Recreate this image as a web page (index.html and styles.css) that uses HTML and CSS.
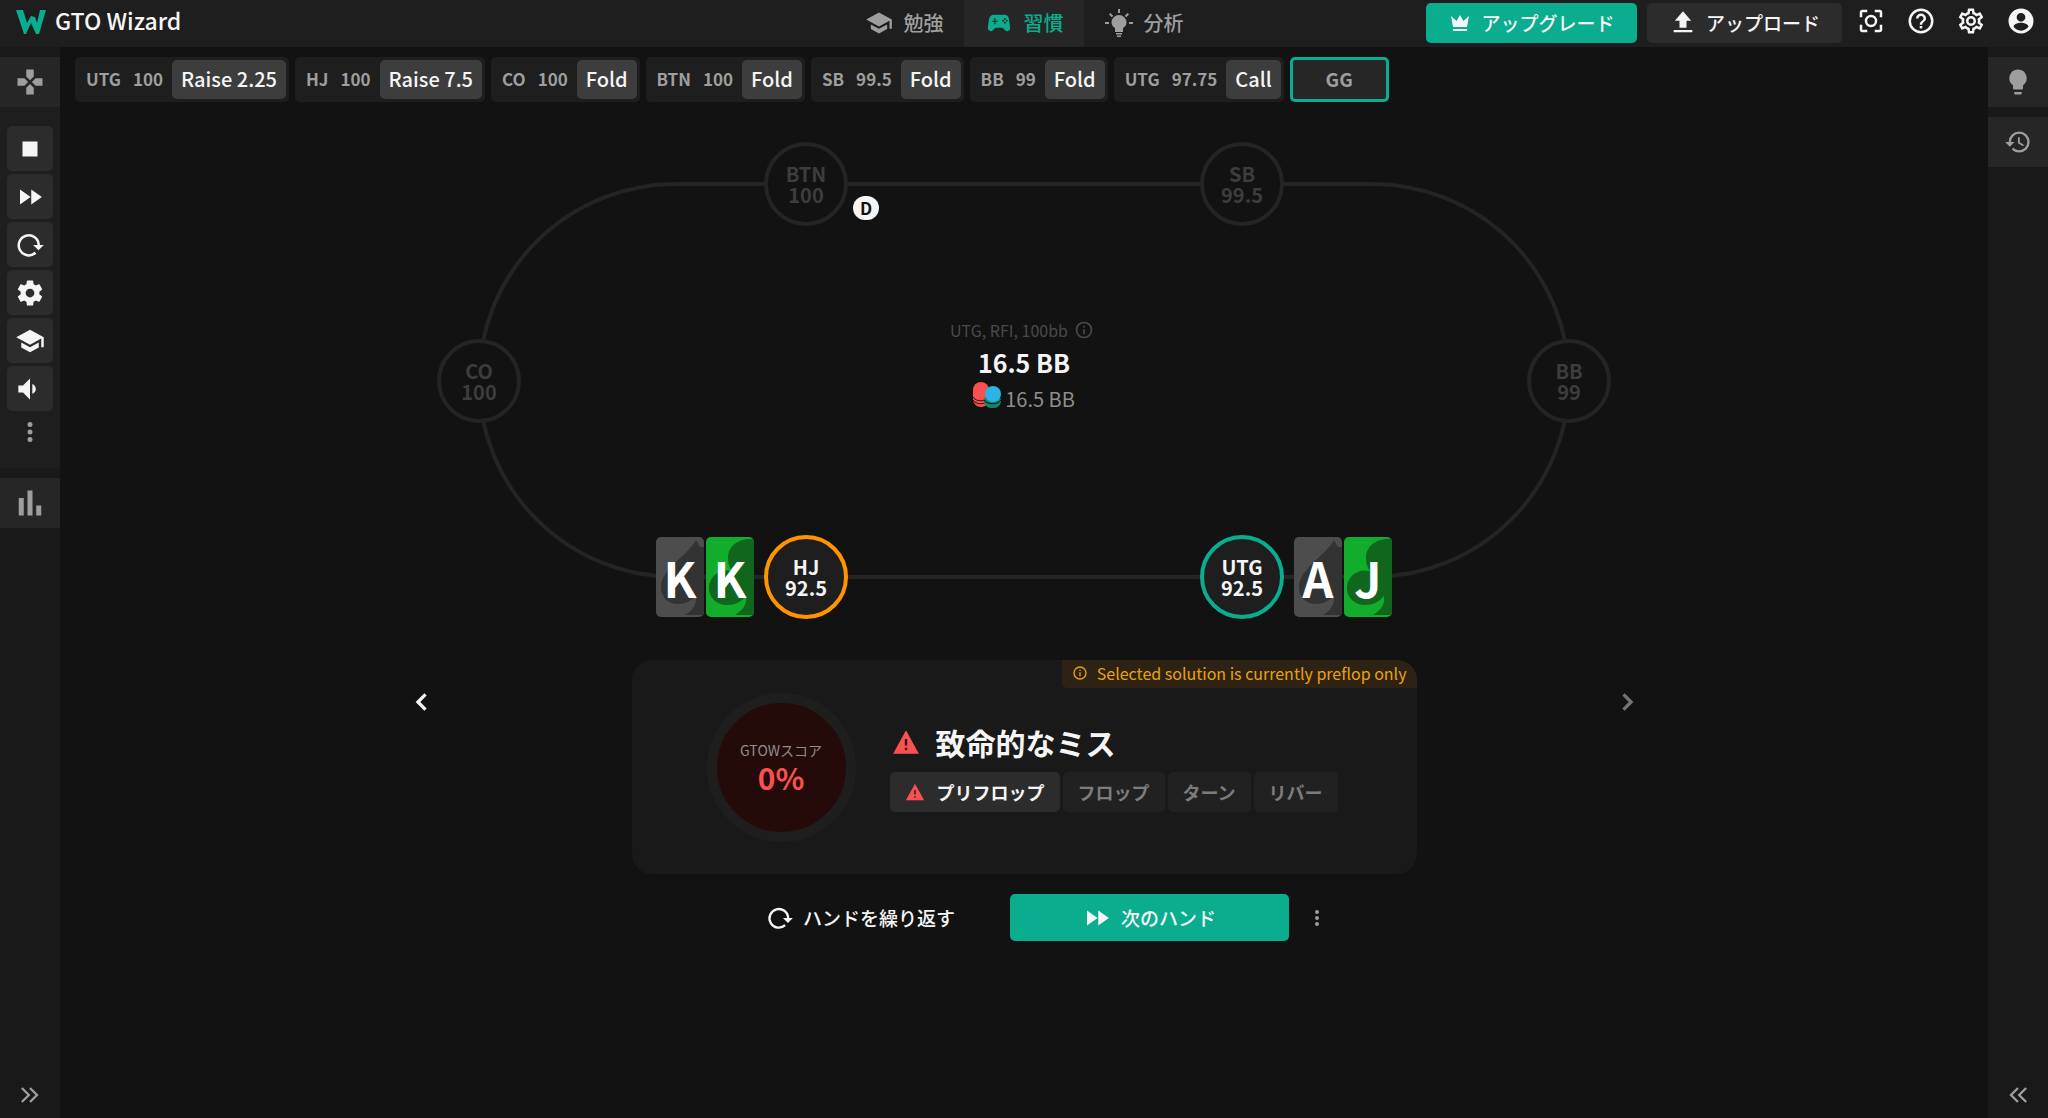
FILE: index.html
```html
<!DOCTYPE html>
<html lang="ja">
<head>
<meta charset="utf-8">
<meta name="viewport" content="width=device-width, initial-scale=1">
<title>GTO Wizard</title>
<link rel="stylesheet" href="styles.css">
</head>
<body>
<svg class="sprite" aria-hidden="true">
  <symbol id="cap" viewBox="0 0 24 24"><path d="M12 3 1 9l11 6 9-4.91V17h2V9M5 13.18v4L12 21l7-3.82v-4L12 17l-7-3.82z"/></symbol>
  <symbol id="pad" viewBox="0 0 24 24"><path fill-rule="evenodd" d="M21.58 16.09l-1.09-7.66A3.996 3.996 0 0 0 16.53 5H7.47C5.48 5 3.79 6.46 3.51 8.43l-1.09 7.66C2.2 17.63 3.39 19 4.94 19c.68 0 1.32-.27 1.8-.75L9 16h6l2.25 2.25c.48.48 1.13.75 1.8.75 1.56 0 2.75-1.37 2.53-2.91zM11 11H9v2H8v-2H6v-1h2V8h1v2h2v1zm4.500-.2a.8.8 0 1 1 0-1.600.8.8 0 0 1 0 1.600zm1.500-1.500a.8.8 0 1 1 0-1.600.8.8 0 0 1 0 1.600zm0 3.200a.8.8 0 1 1 0-1.600.8.8 0 0 1 0 1.600zm1.600-1.700a.8.8 0 1 1 0-1.600.8.8 0 0 1 0 1.600z"/></symbol>
  <symbol id="shine" viewBox="0 0 28 28"><path d="M13 0h2v4h-2zM0 13h4v2H0zm24 0h4v2h-4zM4 5.4 5.4 4l2.8 2.8-1.4 1.4zM22.600 4 24 5.400l-2.800 2.800-1.400-1.400zM14 6a7.500 7.500 0 0 0-7.500 7.500c0 2.500 1.500 4.300 3.500 5.500v4h8v-4c2-1.200 3.500-3 3.500-5.500A7.500 7.500 0 0 0 14 6zM11 24h6v1.500h-6zm1 2.500h4V28h-4z"/></symbol>
  <symbol id="crown" viewBox="0 0 24 24"><path d="M5 16 3 5l5.500 5L12 4l3.500 6L21 5l-2 11H5m14 3c0 .6-.4 1-1 1H6c-.6 0-1-.4-1-1v-1h14v1z"/></symbol>
  <symbol id="upload" viewBox="0 0 24 24"><path d="M9 16v-6H5l7-8 7 8h-4v6H9zm-5 4v-2h16v2H4z"/></symbol>
  <symbol id="scan" viewBox="0 0 24 24"><path d="M5 15H3v4c0 1.100.9 2 2 2h4v-2H5v-4zM5 5h4V3H5c-1.100 0-2 .9-2 2v4h2V5zm14-2h-4v2h4v4h2V5c0-1.100-.9-2-2-2zm0 16h-4v2h4c1.100 0 2-.9 2-2v-4h-2v4zM12 7a5 5 0 1 0 0 10 5 5 0 0 0 0-10zm0 8a3 3 0 1 1 0-6 3 3 0 0 1 0 6z"/></symbol>
  <symbol id="help" viewBox="0 0 24 24"><path d="M11 18h2v-2h-2v2zm1-16a10 10 0 1 0 0 20 10 10 0 0 0 0-20zm0 18a8 8 0 1 1 0-16 8 8 0 0 1 0 16zm0-14a4 4 0 0 0-4 4h2a2 2 0 1 1 4 0c0 2-3 1.750-3 5h2c0-2.250 3-2.500 3-5a4 4 0 0 0-4-4z"/></symbol>
  <symbol id="gear" viewBox="0 0 24 24"><path d="M12 15.500A3.500 3.500 0 0 1 8.500 12 3.500 3.500 0 0 1 12 8.500a3.500 3.500 0 0 1 3.500 3.500 3.500 3.500 0 0 1-3.500 3.500m7.430-2.530c.04-.32.07-.64.07-.97 0-.33-.03-.66-.07-1l2.110-1.630c.19-.15.24-.42.12-.64l-2-3.460c-.12-.22-.39-.31-.61-.22l-2.490 1c-.52-.39-1.060-.73-1.690-.98l-.37-2.650A.506.506 0 0 0 14 2h-4c-.25 0-.46.18-.5.42l-.37 2.650c-.63.25-1.170.59-1.690.98l-2.490-1c-.22-.09-.49 0-.61.22l-2 3.460c-.13.22-.07.49.12.64L4.570 11c-.04.34-.07.67-.07 1 0 .33.03.65.07.97l-2.110 1.660c-.19.15-.25.42-.12.64l2 3.460c.12.22.39.3.61.22l2.490-1.010c.52.4 1.060.74 1.690.99l.37 2.650c.04.24.25.42.5.42h4c.25 0 .46-.18.5-.42l.37-2.650c.63-.26 1.170-.59 1.690-.99l2.490 1.010c.22.08.49 0 .61-.22l2-3.460c.12-.22.07-.49-.12-.64l-2.110-1.660z"/></symbol>
  <symbol id="gearline" viewBox="0 0 24 24"><path d="M12 8a4 4 0 1 1 0 8 4 4 0 0 1 0-8m0 2a2 2 0 1 0 0 4 2 2 0 0 0 0-4m-2 12c-.25 0-.46-.18-.5-.42l-.37-2.650c-.63-.25-1.170-.59-1.690-.99l-2.490 1.010c-.22.08-.49 0-.61-.22l-2-3.460c-.13-.22-.07-.49.12-.64l2.110-1.660L4.500 12l.07-1-2.110-1.630c-.19-.15-.25-.42-.12-.64l2-3.460c.12-.22.39-.31.61-.22l2.490 1c.52-.39 1.060-.73 1.690-.98l.37-2.650c.04-.24.25-.42.5-.42h4c.25 0 .46.18.5.42l.37 2.650c.63.25 1.170.59 1.690.98l2.490-1c.22-.09.49 0 .61.22l2 3.460c.13.22.07.49-.12.64L19.430 11l.07 1-.07 1 2.110 1.630c.19.15.25.42.12.64l-2 3.460c-.12.22-.39.31-.61.22l-2.490-1c-.52.39-1.060.73-1.690.98l-.37 2.650c-.04.24-.25.42-.5.42h-4m1.250-18-.37 2.610c-1.200.25-2.260.89-3.030 1.780L5.440 7.350l-.75 1.300L6.800 10.200a5.550 5.550 0 0 0 0 3.600l-2.120 1.560.75 1.300 2.430-1.040c.77.88 1.820 1.520 3.010 1.760l.37 2.620h1.520l.37-2.610c1.190-.25 2.240-.89 3.010-1.770l2.430 1.040.75-1.300-2.120-1.550c.4-1.170.4-2.440 0-3.610l2.110-1.550-.75-1.300-2.410 1.040c-.77-.89-1.830-1.530-3.030-1.770L12.750 4h-1.500z"/></symbol>
  <symbol id="user" viewBox="0 0 24 24"><path d="M12 2a10 10 0 1 0 0 20 10 10 0 0 0 0-20zm0 3.500a3.500 3.500 0 1 1 0 7 3.500 3.500 0 0 1 0-7zm0 14.200c-2.500 0-4.710-1.280-6-3.220.03-1.990 4-3.080 6-3.080s5.970 1.090 6 3.080a7.200 7.200 0 0 1-6 3.220z"/></symbol>
  <symbol id="dpad" viewBox="0 0 24 24"><path d="M15 7.500V2H9v5.500l3 3 3-3zM7.500 9H2v6h5.500l3-3-3-3zM9 16.500V22h6v-5.500l-3-3-3 3zM16.500 9l-3 3 3 3H22V9h-5.500z"/></symbol>
  <symbol id="stop" viewBox="0 0 24 24"><path d="M6 6h12v12H6z"/></symbol>
  <symbol id="ff" viewBox="0 0 24 24"><path d="M4 18l8.500-6L4 6v12zm9-12v12l8.500-6L13 6z"/></symbol>
  <symbol id="redo" viewBox="0 0 24 24"><path d="M16.400 18.200A8 8 0 1 1 19 12" fill="none" stroke="currentColor" stroke-width="2"/><path d="M14.500 12H23l-4.200 4.200z"/></symbol>
  <symbol id="sound" viewBox="0 0 24 24"><path d="M2 9v6h4l6 6V3L6 9H2zm12-1.200v8.400c1.800-.8 3-2.400 3-4.200s-1.200-3.400-3-4.200z"/></symbol>
  <symbol id="dots" viewBox="0 0 24 24"><path d="M12 8a2 2 0 1 0 0-4 2 2 0 0 0 0 4zm0 2a2 2 0 1 0 0 4 2 2 0 0 0 0-4zm0 6a2 2 0 1 0 0 4 2 2 0 0 0 0-4z"/></symbol>
  <symbol id="bars" viewBox="0 0 24 24"><path d="M3 8h4v14H3zM10 2h4v20h-4zM17 14h4v8h-4z"/></symbol>
  <symbol id="bulb" viewBox="0 0 24 24"><path d="M9 21c0 .5.4 1 1 1h4c.6 0 1-.5 1-1v-1H9v1zm3-19a7 7 0 0 0-4 12.700V17c0 .5.400 1 1 1h6c.6 0 1-.5 1-1v-2.300A7 7 0 0 0 12 2z"/></symbol>
  <symbol id="history" viewBox="0 0 24 24"><path d="M13.500 8H12v5l4.280 2.540.72-1.210-3.500-2.080V8M13 3a9 9 0 0 0-9 9H1l3.960 4.030L9 12H6a7 7 0 0 1 7-7 7 7 0 0 1 7 7 7 7 0 0 1-7 7c-1.930 0-3.680-.79-4.940-2.060l-1.420 1.420A8.900 8.900 0 0 0 13 21a9 9 0 0 0 0-18"/></symbol>
  <symbol id="info" viewBox="0 0 24 24"><path d="M11 7h2v2h-2V7zm0 4h2v6h-2v-6zm1-9a10 10 0 1 0 0 20 10 10 0 0 0 0-20zm0 18a8 8 0 1 1 0-16 8 8 0 0 1 0 16z"/></symbol>
  <symbol id="warn" viewBox="0 0 24 24"><path d="M1 22 12 2l11 20H1zm12-3v-2h-2v2h2zm0-4V9.500h-2V15h2z"/></symbol>
  <symbol id="chev2" viewBox="0 0 24 24"><path d="m5 6 6 6-6 6m7-12 6 6-6 6" fill="none" stroke="currentColor" stroke-width="2"/></symbol>
  <symbol id="chev" viewBox="0 0 24 24"><path d="m15 5.500-6.500 6.500 6.500 6.500" fill="none" stroke="currentColor" stroke-width="2.800"/></symbol>
  <symbol id="spade" viewBox="0 0 48 80"><path d="M40 3C32 18 5 32 5 50c0 11 8 17 17 17 8 0 13-3 18-9 1 9-3 15-11 20h30V10H44z"/></symbol>
  <symbol id="club" viewBox="0 0 48 80"><path d="M44 2C30 2 22 11 22 21c0 5 1 9 4 13C13 31 3 40 3 51c0 10 8 17 18 17 8 0 14-3 19-9 1 9-3 14-11 19h30V2z"/></symbol>
</svg>

<header class="topbar">
  <a class="brand" href="#">
    <svg class="logo" viewBox="0 0 30 24" aria-hidden="true"><path d="M0 0h7l4 13 4-7 4 1 2 6 3-13h6l-7 24h-3l-5-11-5 11H8z"/></svg>
    <span>GTO Wizard</span>
  </a>
  <nav class="tabs">
    <a class="tab" href="#"><svg class="i28"><use href="#cap"/></svg>勉強</a>
    <a class="tab active" href="#"><svg class="i28"><use href="#pad"/></svg>習慣</a>
    <a class="tab" href="#"><svg class="i28"><use href="#shine"/></svg>分析</a>
  </nav>
  <div class="account">
    <button class="btn primary upgrade"><svg class="i24"><use href="#crown"/></svg>アップグレード</button>
    <button class="btn upload"><svg class="i28"><use href="#upload"/></svg>アップロード</button>
    <div class="tools">
      <button class="icon" aria-label="スキャン"><svg class="i30"><use href="#scan"/></svg></button>
      <button class="icon" aria-label="ヘルプ"><svg class="i30"><use href="#help"/></svg></button>
      <button class="icon" aria-label="設定"><svg class="i30"><use href="#gearline"/></svg></button>
      <button class="icon" aria-label="アカウント"><svg class="i30"><use href="#user"/></svg></button>
    </div>
  </div>
</header>

<div class="shell">
  <aside class="rail">
    <button class="slab" aria-label="トレーナー"><svg class="i30"><use href="#dpad"/></svg></button>
    <div class="controls">
      <button class="ctl" aria-label="停止"><svg class="i30"><use href="#stop"/></svg></button>
      <button class="ctl" aria-label="次へ"><svg class="i30"><use href="#ff"/></svg></button>
      <button class="ctl" aria-label="繰り返す"><svg class="i30"><use href="#redo"/></svg></button>
      <button class="ctl" aria-label="設定"><svg class="i30"><use href="#gear"/></svg></button>
      <button class="ctl" aria-label="学習"><svg class="i30"><use href="#cap"/></svg></button>
      <button class="ctl" aria-label="音量"><svg class="i28"><use href="#sound"/></svg></button>
      <button class="ctl plain" aria-label="その他"><svg class="i30"><use href="#dots"/></svg></button>
    </div>
    <button class="slab" aria-label="統計"><svg class="i30"><use href="#bars"/></svg></button>
    <button class="collapse" aria-label="展開"><svg class="i28"><use href="#chev2"/></svg></button>
  </aside>

  <main class="main">
    <ol class="actions">
      <li class="act"><span>UTG</span><span>100</span><button class="move">Raise 2.25</button></li>
      <li class="act"><span>HJ</span><span>100</span><button class="move">Raise 7.5</button></li>
      <li class="act"><span>CO</span><span>100</span><button class="move">Fold</button></li>
      <li class="act"><span>BTN</span><span>100</span><button class="move">Fold</button></li>
      <li class="act"><span>SB</span><span>99.5</span><button class="move">Fold</button></li>
      <li class="act"><span>BB</span><span>99</span><button class="move">Fold</button></li>
      <li class="act"><span>UTG</span><span>97.75</span><button class="move">Call</button></li>
      <li class="act current"><span>GG</span></li>
    </ol>

    <section class="table" aria-label="テーブル">
      <div class="seat btn-seat"><b>BTN</b><b>100</b><span class="dealer">D</span></div>
      <div class="seat sb"><b>SB</b><b>99.5</b></div>
      <div class="seat co"><b>CO</b><b>100</b></div>
      <div class="seat bb"><b>BB</b><b>99</b></div>
      <div class="seat live hj"><b>HJ</b><b>92.5</b>
        <div class="cards left">
          <div class="card spades"><svg viewBox="0 0 48 80"><use href="#spade"/></svg><span>K</span></div>
          <div class="card clubs"><svg viewBox="0 0 48 80"><use href="#club"/></svg><span>K</span></div>
        </div>
      </div>
      <div class="seat live utg"><b>UTG</b><b>92.5</b>
        <div class="cards right">
          <div class="card spades"><svg viewBox="0 0 48 80"><use href="#spade"/></svg><span>A</span></div>
          <div class="card clubs"><svg viewBox="0 0 48 80"><use href="#club"/></svg><span>J</span></div>
        </div>
      </div>
      <div class="pot">
        <p class="spot">UTG, RFI, 100bb <svg class="i20"><use href="#info"/></svg></p>
        <p class="total">16.5 BB</p>
        <p class="stack">
          <svg class="chips" viewBox="0 0 28 26" aria-hidden="true">
            <path class="red" d="M0 9h16v8c0 4-3 8-8 8s-8-4-8-8z"/><circle class="red" cx="8" cy="8" r="8"/>
            <path class="cut" d="M0 15c3 5 12 5 15 0M0 18c3 5 12 5 15 0"/>
            <rect class="green" x="11" y="12" width="17" height="14" rx="7"/>
            <path class="cut" d="M11 18c3 5 14 5 17 0"/>
            <circle class="blue" cx="20" cy="12" r="8"/>
          </svg>16.5 BB</p>
      </div>
    </section>

    <section class="result">
      <button class="step prev" aria-label="前へ"><svg class="i28"><use href="#chev"/></svg></button>
      <div class="panel">
        <p class="notice"><svg class="i16"><use href="#info"/></svg>Selected solution is currently preflop only</p>
        <div class="score"><span>GTOWスコア</span><strong>0%</strong></div>
        <div class="verdict">
          <h1><svg class="i28"><use href="#warn"/></svg>致命的なミス</h1>
          <div class="streets">
            <button class="street on"><svg class="i20"><use href="#warn"/></svg>プリフロップ</button>
            <button class="street">フロップ</button>
            <button class="street">ターン</button>
            <button class="street">リバー</button>
          </div>
        </div>
      </div>
      <button class="step next" aria-label="次へ"><svg class="i28"><use href="#chev"/></svg></button>
    </section>

    <div class="footer">
      <button class="btn repeat"><svg class="i28"><use href="#redo"/></svg>ハンドを繰り返す</button>
      <button class="btn primary deal"><svg class="i30"><use href="#ff"/></svg>次のハンド</button>
      <button class="icon more" aria-label="その他"><svg class="i24"><use href="#dots"/></svg></button>
    </div>
  </main>

  <aside class="rail end">
    <button class="slab" aria-label="ヒント"><svg class="i30"><use href="#bulb"/></svg></button>
    <button class="slab" aria-label="履歴"><svg class="i28"><use href="#history"/></svg></button>
    <button class="collapse" aria-label="展開"><svg class="i28"><use href="#chev2"/></svg></button>
  </aside>
</div>
</body>
</html>
```
FILE: styles.css
```css
:root {
  --teal: #0aad8e;
  --red: #fa504f;
  --text: #f5f5f5;
  --muted: #9e9e9e;
  --line: #242424;
}

* { box-sizing: border-box; }

body {
  margin: 0;
  min-height: 100vh;
  display: flex;
  flex-direction: column;
  background: #121212;
  color: var(--text);
  font: 400 18px/24px "Noto Sans CJK JP", sans-serif;
}

p, h1, ol { margin: 0; padding: 0; }
a { color: inherit; text-decoration: none; }
button { font: inherit; color: inherit; background: none; border: 0; padding: 0; }
svg { fill: currentColor; flex: none; display: block; }

.sprite { position: absolute; width: 0; height: 0; }
.i16 { width: 16px; height: 16px; }
.i20 { width: 20px; height: 20px; }
.i24 { width: 24px; height: 24px; }
.i28 { width: 28px; height: 28px; }
.i30 { width: 30px; height: 30px; }

/* top bar */
.topbar {
  display: grid;
  grid-template-columns: 1fr auto 1fr;
  height: 47px;
  background: #1e1e1e;
}
.brand { display: flex; align-items: center; gap: 9px; padding: 0 0 4px 16px; font-size: 23px; font-weight: 500; }
.brand span { padding-bottom: 4px; }
.logo { width: 30px; height: 24px; color: var(--teal); }
.tabs { display: flex; }
.tab { width: 120px; display: flex; align-items: center; justify-content: center; gap: 11px; padding-bottom: 2px; color: var(--muted); font-size: 20px; font-weight: 500; }
.tab.active { background: #262626; color: var(--teal); }
.account { display: flex; justify-content: flex-end; align-items: flex-start; gap: 10px; padding: 3px 12px 0 0; }
.btn { display: flex; align-items: center; justify-content: center; height: 40px; gap: 9px; border-radius: 5px; background: #2c2c2c; font-size: 19px; font-weight: 500; }
.btn.primary { background: var(--teal); }
.upgrade { width: 211px; }
.upload { width: 195px; }
.tools { display: flex; gap: 20px; padding: 3px 0 0 4px; }
.icon { display: flex; }

/* side rails */
.shell { flex: 1; display: flex; }
.rail { width: 60px; flex: none; display: flex; flex-direction: column; gap: 10px; padding-top: 10px; background: #191919; color: var(--muted); }
.slab { height: 50px; flex: none; display: grid; place-items: center; background: #262626; }
.controls { display: flex; flex-direction: column; align-items: center; gap: 3px; margin-top: -10px; padding: 19px 0 18px; background: #1e1e1e; }
.ctl { width: 46px; height: 45px; display: grid; place-items: center; border-radius: 5px; background: #2c2c2c; color: var(--text); }
.ctl.plain { height: 36px; background: none; color: var(--muted); }
.collapse { margin-top: auto; height: 46px; display: grid; place-items: center; }
.end .collapse { transform: rotate(180deg); }

/* action history */
.main { flex: 1; min-width: 0; }
.actions { display: flex; gap: 6px; padding: 10px 15px 0; list-style: none; }
.act { display: flex; align-items: center; gap: 12px; height: 45px; padding: 3px 3px 3px 11px; border-radius: 5px; background: #1e1e1e; color: var(--muted); font-size: 17px; font-weight: 700; }
.act span { padding-bottom: 1px; }
.move { height: 39px; margin-left: -3px; padding: 0 9px 2px; border-radius: 5px; background: #3d3d3d; color: var(--text); font-size: 20px; font-weight: 500; }
.act.current { width: 99px; justify-content: center; padding: 0; border: 3px solid var(--teal); background: #262626; font-size: 19px; }

/* poker table: seats sit freely around the oval */
.table { position: relative; width: 1090px; height: 393px; margin: 82px auto 0; }
.table::before { content: ""; position: absolute; inset: -2px; border: 4px solid var(--line); border-radius: 200px; }
.seat { position: absolute; width: 84px; height: 84px; margin: -42px; display: flex; flex-direction: column; align-items: center; justify-content: center; border: 4px solid var(--line); border-radius: 50%; background: #121212; color: #3d3d3d; font-size: 20px; line-height: 21px; }
.seat b { font-weight: 700; }
.seat.live { background: #1e1e1e; color: var(--text); }
.btn-seat, .sb { top: 0; }
.co, .bb { top: 50%; }
.hj, .utg { top: 100%; }
.btn-seat, .hj { left: 30%; }
.sb, .utg { left: 70%; }
.co { left: 0; }
.bb { left: 100%; }
.seat.hj { border-color: #ff9400; }
.seat.utg { border-color: var(--teal); }
.dealer { position: absolute; left: 85px; top: 50px; width: 26px; height: 24px; border-radius: 12px; background: var(--text); color: #121212; font-size: 17px; font-weight: 700; line-height: 23px; text-align: center; }
.cards { position: absolute; top: -2px; display: flex; gap: 2px; }
.cards.left { right: 90px; }
.cards.right { left: 90px; }
.card { position: relative; width: 48px; height: 80px; overflow: hidden; border-radius: 5px; color: #fff; font-size: 48px; font-weight: 700; line-height: 80px; text-align: center; }
.card svg { position: absolute; inset: 0; }
.card span { position: relative; }
.spades { background: #4d4d4d; }
.spades svg { color: #333; }
.clubs { background: #11ad2b; }
.clubs svg { color: #10661d; }

.pot { height: 100%; display: flex; flex-direction: column; align-items: center; padding-top: 134px; }
.spot { display: flex; align-items: center; gap: 6px; padding-right: 4px; color: #4a4a4a; font-size: 16px; }
.total { margin-top: 3px; font-size: 25px; font-weight: 700; line-height: 34px; }
.stack { display: flex; align-items: center; gap: 4px; margin-top: 3px; color: #8e8e8e; font-size: 20px; line-height: 34px; }
.chips { width: 28px; height: 26px; margin-bottom: 8px; }
.red { fill: var(--red); }
.green { fill: #148566; }
.blue { fill: #2cb4e8; }
.cut { fill: none; stroke: #121212; }

/* hand result */
.result { display: flex; align-items: flex-start; justify-content: center; gap: 196px; margin-top: 83px; }
.step { display: flex; margin-top: 28px; }
.next { color: #757575; transform: rotate(180deg); }
.panel { position: relative; flex: 0 1 785px; display: flex; align-items: center; gap: 34px; min-height: 214px; padding: 0 75px; border-radius: 20px; background: #191919; overflow: hidden; }
.notice { position: absolute; top: 0; right: 0; display: flex; align-items: center; gap: 9px; height: 28px; padding: 0 10px 2px; border-bottom-left-radius: 5px; background: #2d2213; color: #e8a40c; font-size: 16px; }
.score { width: 149px; height: 149px; display: flex; flex-direction: column; align-items: center; justify-content: center; padding-bottom: 4px; border: 10px solid #1e1e1e; border-radius: 50%; background: #250a0a; color: #8e8e8e; font-size: 14px; }
.score strong { color: var(--red); font-size: 30px; font-weight: 700; line-height: 30px; }
.verdict h1 { display: flex; align-items: center; gap: 16px; padding: 0 0 2px 2px; font-size: 30px; font-weight: 700; line-height: 38px; }
.verdict svg { color: var(--red); }
.streets { display: flex; gap: 3px; margin-top: 9px; }
.street { display: flex; align-items: center; gap: 12px; height: 40px; padding: 0 15px; border-radius: 5px; background: #212121; color: #7c7c7c; font-size: 18px; font-weight: 700; }
.street.on { background: #2c2c2c; color: var(--text); }

.footer { display: flex; align-items: center; justify-content: center; gap: 16px; margin-top: 20px; padding-left: 27px; }
.footer .btn { height: 47px; }
.footer .repeat { width: 228px; margin-right: 19px; background: none; }
.deal { width: 279px; }
.more { color: var(--muted); }
```
